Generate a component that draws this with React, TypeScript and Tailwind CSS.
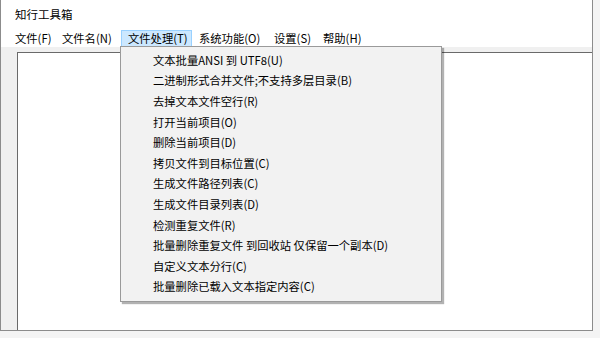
import React from "react";

const menuItems = [
  "文本批量ANSI 到 UTF8(U)",
  "二进制形式合并文件;不支持多层目录(B)",
  "去掉文本文件空行(R)",
  "打开当前项目(O)",
  "删除当前项目(D)",
  "拷贝文件到目标位置(C)",
  "生成文件路径列表(C)",
  "生成文件目录列表(D)",
  "检测重复文件(R)",
  "批量删除重复文件 到回收站 仅保留一个副本(D)",
  "自定义文本分行(C)",
  "批量删除已载入文本指定内容(C)",
];

export default function App() {
  return (
    <div
      className="relative w-[600px] h-[338px] overflow-hidden bg-[#f4f4f4] text-[11.3px] text-black"
      style={{ fontFamily: '"Noto Sans CJK SC", "Noto Sans", sans-serif' }}
    >
      <div className="w-[593px] h-[331px] flex flex-col bg-[#f0f0f0] border-l border-r border-b border-[#8c8c8c]">
        <div className="h-[30px] bg-white flex items-center pl-[14px] text-[11.5px]">知行工具箱</div>
        <div className="h-[17px] bg-white flex items-stretch pl-[7px] leading-none">
          <div className="w-[47px] pl-[7px] flex items-center">文件(F)</div>
          <div className="w-[66px] pl-[7px] flex items-center">文件名(N)</div>
          <div className="w-[71px] pl-[6px] flex items-center bg-[#cce8ff] border border-[#99d1ff]">文件处理(T)</div>
          <div className="w-[75px] pl-[7px] flex items-center">系统功能(O)</div>
          <div className="w-[49px] pl-[7px] flex items-center">设置(S)</div>
          <div className="w-[60px] pl-[7px] flex items-center">帮助(H)</div>
        </div>
        <div className="flex-1 pt-[5px] pl-[16px] flex">
          <div className="flex-1 bg-white border-t border-l border-[#6a6a6a]"></div>
        </div>
      </div>

      <div className="absolute left-[120px] top-[46px] w-[322px] h-[256px] bg-[#f2f2f2] border border-[#9a9a9a] shadow-[2px_2px_1px_rgba(0,0,0,0.3)] pt-[3px]">
        {menuItems.map((t) => (
          <div key={t} className="h-[20.6px] flex items-center pl-[32px] whitespace-pre">
            {t}
          </div>
        ))}
      </div>
    </div>
  );
}
